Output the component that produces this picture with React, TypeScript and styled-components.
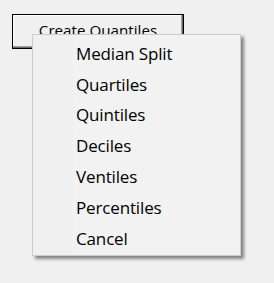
import React from "react"
import styled, { createGlobalStyle } from "styled-components"

const GlobalStyle = createGlobalStyle`
  html, body {
    margin: 0;
    padding: 0;
    background: #f0f0f0;
  }
  body {
    width: 274px;
    height: 283px;
    overflow: hidden;
    font-family: "Open Sans", "Noto Sans", sans-serif;
  }
`

const Page = styled.div`
  position: relative;
  padding: 14px 0 0 12px;
  height: 283px;
  box-sizing: border-box;
`

const ActionButton = styled.button`
  display: flex;
  align-items: flex-start;
  justify-content: center;
  width: 172px;
  height: 35px;
  box-sizing: border-box;
  margin: 0;
  padding: 5px 0 0;
  background: #f0f0f0;
  border: 1px solid #000;
  border-radius: 0;
  box-shadow: inset -1px -1px 0 #696969, inset -2px -2px 0 #a0a0a0, inset 1px 1px 0 #fff;
  font-family: "Open Sans", "Noto Sans", sans-serif;
  font-size: 15.2px;
  color: #000;
  cursor: default;
`

const Menu = styled.ul`
  position: absolute;
  left: 32px;
  top: 34px;
  width: 209px;
  height: 222px;
  box-sizing: border-box;
  margin: 0;
  padding: 3px 0 0;
  list-style: none;
  background: linear-gradient(to right, #f0f0f0 0 40px, #f2f2f2 40px);
  border: 1px solid #cccccc;
  box-shadow: 3px 3px 3px rgba(0, 0, 0, 0.45);
`

const MenuItem = styled.li`
  display: flex;
  align-items: center;
  height: 30.8px;
  padding-left: 43px;
  font-size: 17px;
  letter-spacing: -0.15px;
  color: #000;
  white-space: nowrap;
`

const items = ["Median Split", "Quartiles", "Quintiles", "Deciles", "Ventiles", "Percentiles", "Cancel"]

export default function App() {
  return (
    <Page>
      <GlobalStyle />
      <ActionButton>Create Quantiles</ActionButton>
      <Menu>
        {items.map((label) => (
          <MenuItem key={label}>{label}</MenuItem>
        ))}
      </Menu>
    </Page>
  )
}
